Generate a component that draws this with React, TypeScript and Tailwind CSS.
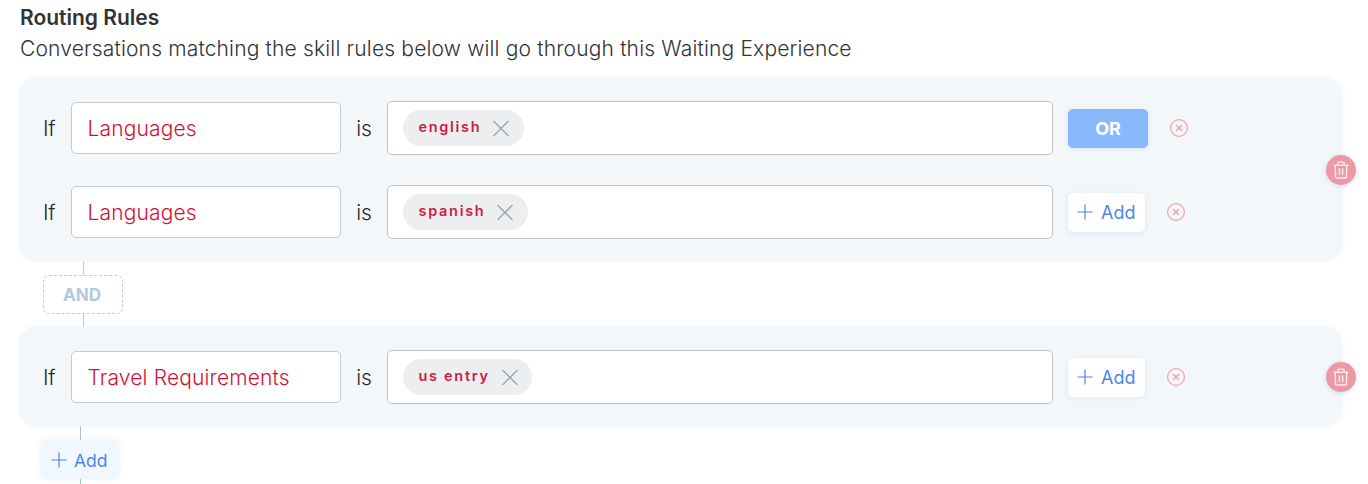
import type { ReactNode } from "react";

function PlusIcon() {
  return (
    <svg width="16" height="16" viewBox="0 0 16 16" fill="none" stroke="currentColor" strokeWidth="1.2" className="-mt-px shrink-0">
      <path d="M8 .5v15M.5 8h15" />
    </svg>
  );
}

function CrossIcon() {
  return (
    <svg width="16" height="16" viewBox="0 0 16 16" fill="none" stroke="#9aa3b2" strokeWidth="1.3" className="shrink-0">
      <path d="M.5 1l15 15M15.5 1l-15 15" />
    </svg>
  );
}

function RemoveIcon() {
  return (
    <svg width="20" height="20" viewBox="0 0 20 20" fill="none" stroke="#f0a0aa" strokeWidth="1.2" className="shrink-0">
      <circle cx="10" cy="10" r="8.4" />
      <path d="M7 7l6 6M13 7l-6 6" strokeWidth="1.5" />
    </svg>
  );
}

function TrashIcon() {
  return (
    <svg width="16" height="18" viewBox="0 0 16 18" fill="none" stroke="#fdeef0" strokeWidth="1.4">
      <path d="M.5 4.3h15" />
      <path d="M4.8 3.8V2.3q0-1.2 1.2-1.2h4q1.2 0 1.2 1.2v1.5" />
      <path d="M2.2 4.3l.4 11.6q0 1.1 1.1 1.1h8.6q1.1 0 1.1-1.1l.4-11.6" />
      <path d="M6.4 7.2v6.8M9.6 7.2v6.8" strokeWidth="1.5" />
    </svg>
  );
}

function AddButton() {
  return (
    <button className="flex h-[39px] w-[77px] items-center gap-2 rounded-[5px] bg-white pt-px pl-[9px] text-[18px] leading-none text-[#4a86ea] shadow-[0_1px_5px_rgba(150,185,210,0.25)]">
      <PlusIcon />
      <span>Add</span>
    </button>
  );
}

function Rule({ skill, value, or = false }: { skill: string; value: string; or?: boolean }) {
  return (
    <div className="flex h-[54px] items-center text-[21px] font-light text-[#25282d]">
      <span className="w-[29px] pt-0.5 pl-px tracking-[-0.2px]">If</span>
      <div className="flex h-[52px] w-[270px] items-center rounded-[5px] border border-[#c6cbd0] bg-white pt-0.5 pl-[15.5px] tracking-[0.15px] text-[#d80f35]">
        {skill}
      </div>
      <span className="w-[46px] pt-0.5 text-center">is</span>
      <div className="flex h-[54px] w-[666px] items-center rounded-[5px] border border-[#bfc3c8] bg-white pl-[15px]">
        <div className="flex h-9 items-center gap-3 rounded-full bg-[#edeef0] pr-[14.5px] pl-[15.5px]">
          <span className="-mt-px text-[14.5px] font-semibold leading-none tracking-[1.7px] text-[#d01c40]">{value}</span>
          <CrossIcon />
        </div>
      </div>
      <div className="ml-[15px] flex items-center gap-[21px] font-normal">
        {or ? (
          <button className="h-[39px] w-20 rounded-[5px] bg-[#8ab8fc] pt-px text-[18px] font-bold leading-none text-white shadow-[0_1px_5px_rgba(150,185,210,0.3)]">
            OR
          </button>
        ) : (
          <AddButton />
        )}
        <RemoveIcon />
      </div>
    </div>
  );
}

function RuleGroup({ children }: { children: ReactNode }) {
  return (
    <section className="relative ml-[19px] flex w-[1323px] flex-col gap-[30px] rounded-[18px] bg-[#f3f7fa] pt-[23px] pb-[22px] pl-[23px] shadow-[0_0_5px_rgba(190,215,230,0.3)]">
      {children}
      <button className="absolute top-1/2 -right-[14px] flex h-[30px] w-[30px] -translate-y-1/2 items-center justify-center rounded-full bg-[#ec98a5] shadow-[0_1px_5px_rgba(130,170,200,0.35)]">
        <TrashIcon />
      </button>
    </section>
  );
}

export default function App() {
  return (
    <main className="h-[484px] w-[1368px] overflow-hidden bg-white font-['Inter',sans-serif] text-[#303338]">
      <header className="h-[78px] pt-[2px] pl-5">
        <h1 className="text-[21px] leading-[31px] font-semibold">Routing Rules</h1>
        <p className="text-[21px] leading-[31px] font-light tracking-[0.17px] whitespace-nowrap">
          Conversations matching the skill rules below will go through this Waiting Experience
        </p>
      </header>

      <RuleGroup>
        <Rule skill="Languages" value="english" or />
        <Rule skill="Languages" value="spanish" />
      </RuleGroup>

      <div className="ml-[43px] flex w-[80px] flex-col items-center">
        <span className="h-[14px] w-px bg-[#b3cfe2]" />
        <div className="flex h-[39px] w-full items-center justify-center rounded-[6px] border-[1.5px] border-dashed border-[#b3cfe2] pt-0.5 pr-0.5 text-[17px] font-bold text-[#afcbe0]">
          AND
        </div>
        <span className="h-[13px] w-px bg-[#b3cfe2]" />
      </div>

      <RuleGroup>
        <Rule skill="Travel Requirements" value="us entry" />
      </RuleGroup>

      <div className="ml-[41px] flex w-[78px] flex-col items-center">
        <span className="h-[14px] w-px bg-[#9fc4e0]" />
        <button className="flex h-[39px] w-full items-center gap-[7px] rounded-[6px] bg-[#f1f7fe] pt-0.5 pl-[10px] text-[17.5px] leading-none text-[#4a86ea] shadow-[0_0_5px_rgba(170,200,225,0.3)]">
          <PlusIcon />
          <span>Add</span>
        </button>
        <span className="h-[8px] w-px bg-[#9fc4e0]" />
      </div>
    </main>
  );
}
